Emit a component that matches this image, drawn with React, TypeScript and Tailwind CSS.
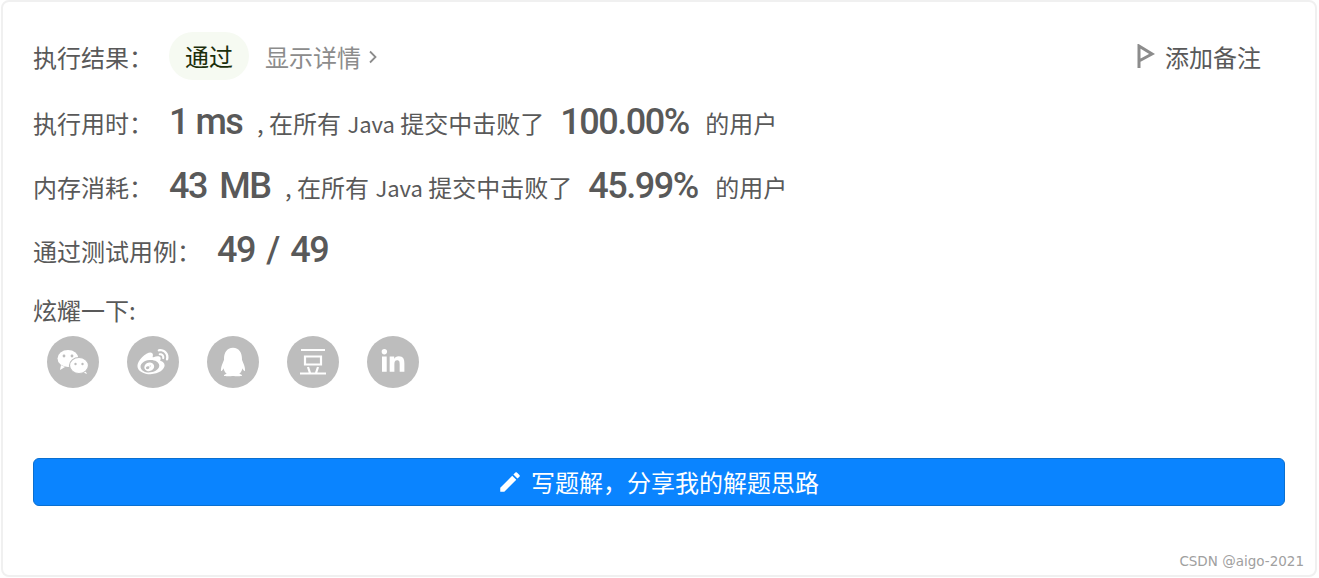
import React from 'react';
import { FaLinkedinIn } from 'react-icons/fa';
import { MdEdit } from 'react-icons/md';
import { RiQqFill, RiWeiboFill } from 'react-icons/ri';

const cjk = "font-['Noto_Sans_CJK_SC','Noto_Sans',sans-serif]";
const num = "font-['Roboto','Noto_Sans_CJK_SC',sans-serif] font-medium text-[36px] leading-none tracking-[-1.5px] mb-[3px] whitespace-nowrap";

const WechatIcon = () => (
  <svg viewBox="0 0 52 52" className="w-[52px] h-[52px]">
    <path d="M14 29l-1 5 5-3z" fill="#fff" />
    <ellipse cx="21" cy="22.5" rx="10.5" ry="8.5" fill="#fff" />
    <circle cx="17" cy="20" r="1.4" fill="#bdbdbd" />
    <circle cx="25" cy="20" r="1.4" fill="#bdbdbd" />
    <path d="M38 34l2 4-5-2z" fill="#fff" />
    <ellipse cx="32" cy="29.5" rx="9.5" ry="8" fill="#fff" stroke="#bdbdbd" strokeWidth="1.2" />
    <circle cx="28.5" cy="28" r="1.2" fill="#bdbdbd" />
    <circle cx="35.5" cy="28" r="1.2" fill="#bdbdbd" />
  </svg>
);

const DoubanIcon = () => (
  <svg viewBox="0 0 32 32" className="w-[32px] h-[32px]" fill="none" stroke="#fff" strokeWidth="2.2">
    <path d="M4 4h24M8 10.5h16v8H8zM11 21l2 6M21 21l-2 6M3 27.5h26" />
  </svg>
);

const FlagIcon = () => (
  <svg viewBox="0 0 18 24" className="w-[18px] h-[24px] -mt-[2px]" fill="none" stroke="#8c8c8c" strokeWidth="3">
    <path d="M2 24V2l13 8L2 17" />
  </svg>
);

const Chevron = () => (
  <svg viewBox="0 0 8 14" className="w-[8px] h-[14px] ml-[8px]" fill="none" stroke="#8c8c8c" strokeWidth="1.8">
    <path d="M1 1.5 6.5 7 1 12.5" />
  </svg>
);

const StatRow = ({ label, value, valueClass, percent, percentWidth, top }: { label: string; value: string; valueClass: string; percent: string; percentWidth: string; top: string }) => (
  <div className={`flex items-center h-[48px] ${top}`}>
    <span className="mr-4">{label}</span>
    <span className={`${num} ${valueClass}`}>{value}</span>
    <span className="ml-[15px]">, 在所有 <span className="text-[22px] ml-px">Java</span> 提交中击败了</span>
    <span className={`${num} ${percentWidth} ml-4`}>{percent}</span>
    <span className="ml-4">的用户</span>
  </div>
);

const socials = [
  <WechatIcon key="wechat" />,
  <RiWeiboFill key="weibo" size={34} color="#fff" />,
  <RiQqFill key="qq" size={34} color="#fff" />,
  <DoubanIcon key="douban" />,
  <FaLinkedinIn key="linkedin" size={26} color="#fff" />,
];

export default function App() {
  return (
    <div className={`w-[1319px] h-[578px] bg-white overflow-hidden pl-px pr-[2px] ${cjk} text-[24px] text-[#595959]`}>
      <div className="relative h-[577px] border-2 border-[#f0f0f0] rounded-lg pt-[31px] pl-[30px] pr-[30px]">
        <div className="flex items-center h-[48px]">
          <span className="mr-4">{'执行结果\uFF1A'}</span>
          <span className="w-[80px] h-[48px] -mt-[2px] rounded-full bg-[#f6faf2] text-[#1b2e0a] flex items-center justify-center">通过</span>
          <span className="ml-4 text-[#8c8c8c] flex items-center">显示详情<Chevron /></span>
          <span className="ml-auto mr-[24px] flex items-center gap-[10px]"><FlagIcon />添加备注</span>
        </div>
        <StatRow label={'执行用时\uFF1A'} value="1 ms" valueClass="w-[73px]" percent="100.00%" percentWidth="w-[129px]" top="mt-[18px]" />
        <StatRow label={'内存消耗\uFF1A'} value="43 MB" valueClass="w-[101px] [word-spacing:5px]" percent="45.99%" percentWidth="w-[111px]" top="mt-[16px]" />
        <div className="flex items-center h-[48px] mt-[16px]">
          <span className="mr-4">{'通过测试用例\uFF1A'}</span>
          <span className={`${num} [word-spacing:4px]`}>49 / 49</span>
        </div>
        <div className="mt-[17px] h-[36px] leading-[36px]">炫耀一下:</div>
        <div className="flex gap-[28px] pl-[14px] mt-[8px]">
          {socials.map((icon, i) => (
            <div key={i} className="w-[52px] h-[52px] rounded-full bg-[#bdbdbd] flex items-center justify-center">
              {icon}
            </div>
          ))}
        </div>
        <button className="w-full h-[48px] mt-[70px] pr-[2px] rounded-[6px] bg-[#0a84ff] border border-[#0a6fd0] text-white flex items-center justify-center gap-[8px]">
          <MdEdit size={26} color="#fff" />
          {'写题解\uFF0C分享我的解题思路'}
        </button>
        <div className="absolute right-[11px] bottom-[7px] font-['DejaVu_Sans',sans-serif] text-[13.5px] leading-none text-[#a0a0a0]">CSDN @aigo-2021</div>
      </div>
    </div>
  );
}
